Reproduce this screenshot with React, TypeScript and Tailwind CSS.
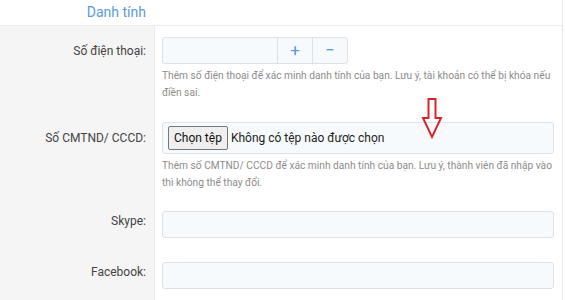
import React from "react";

const font = { fontFamily: "Roboto, 'Noto Sans', Arial, sans-serif" };

function Label({ children, className = "" }: { children: React.ReactNode; className?: string }) {
  return (
    <div className={`flex items-center justify-end pr-[8px] text-[12px] text-[#444] ${className}`}>
      {children}
    </div>
  );
}

function Help({ children }: { children: React.ReactNode }) {
  return <p className="mt-[3px] text-[10.2px] leading-[17px] text-[#8c8c8c]">{children}</p>;
}

export default function App() {
  const rows = [
    { label: "Skype:", top: "mt-[20px]" },
    { label: "Facebook:", top: "mt-[24px]" },
  ];

  return (
    <div className="relative h-[300px] w-[565px] overflow-hidden bg-white" style={font}>
      <div className="h-[300px] w-[563px] border-r border-[#e6e6e6]">
        {/* header */}
        <div className="flex h-[26px] border-b border-[#ececec]">
          <div className="flex w-[154px] items-center justify-end pr-[8px] text-[14px] text-[#5b9bd5]">
            Danh tính
          </div>
        </div>

        <div className="flex">
          {/* label column */}
          <div className="h-[274px] w-[155px] shrink-0 border-r border-[#ebebeb] bg-[#f5f5f5]">
            <Label className="mt-[11px] h-[27px]">Số điện thoại:</Label>
            <Label className="mt-[58px] h-[31px]">Số CMTND/ CCCD:</Label>
            <Label className="mt-[54px] h-[27px]">Skype:</Label>
            <Label className="mt-[24px] h-[27px]">Facebook:</Label>
          </div>

          {/* fields */}
          <div className="flex-1 pl-[7px] pr-[8px]">
            <div className="mt-[11px] flex h-[27px] w-[186px] overflow-hidden rounded-[3px] border border-[#dde2e7] bg-[#f7fafd]">
              <div className="flex-1" />
              <div className="flex w-[35px] items-center justify-center border-l border-[#dde2e7] text-[17px] text-[#5b9bd5]">
                +
              </div>
              <div className="flex w-[35px] items-center justify-center border-l border-[#dde2e7] text-[17px] text-[#5b9bd5]">
                −
              </div>
            </div>
            <Help>
              Thêm số điện thoại để xác minh danh tính của bạn. Lưu ý, tài khoản có thể bị khóa nếu
              điền sai.
            </Help>

            <div className="mt-[21px] flex h-[32px] items-center rounded-[3px] border border-[#dde2e7] bg-[#f7fafd] pl-[5px]">
              <span className="flex h-[24px] items-center rounded-[2px] border border-[#767676] bg-[#efefef] px-[5px] text-[12px] text-[#111]">
                Chọn tệp
              </span>
              <span className="ml-[3px] text-[12px] text-[#222]">Không có tệp nào được chọn</span>
            </div>
            <Help>
              Thêm số CMTND/ CCCD để xác minh danh tính của bạn. Lưu ý, thành viên đã nhập vào
              thì không thể thay đổi.
            </Help>

            {rows.map((r) => (
              <div
                key={r.label}
                className={`${r.top} h-[27px] rounded-[3px] border border-[#dde2e7] bg-[#f7fafd]`}
              />
            ))}
          </div>
        </div>
      </div>

      {/* red arrow annotation */}
      <svg className="absolute left-[421px] top-[97px]" width="22" height="43" viewBox="0 0 22 43">
        <path d="M7.5 2 H14.5 V21 H20 L11 40 L2 21 H7.5 Z" fill="none" stroke="#d7262b" strokeWidth="2" />
      </svg>
    </div>
  );
}
